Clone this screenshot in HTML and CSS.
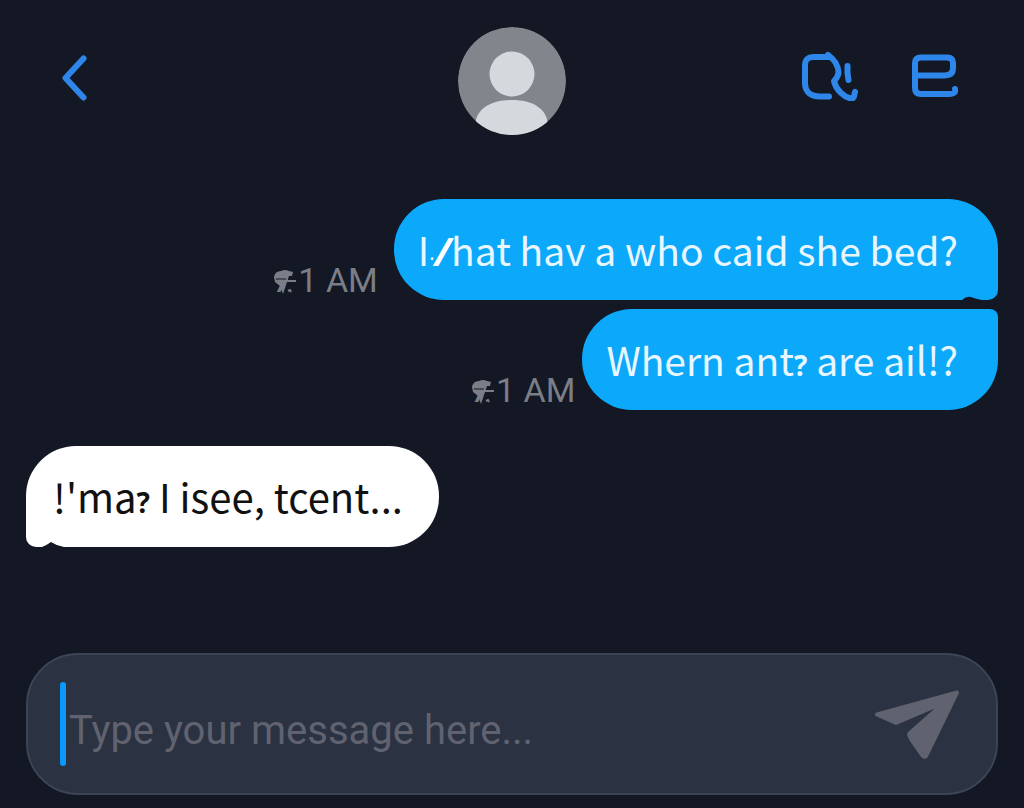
FILE: index.html
```html
<!DOCTYPE html>
<html lang="en">
<head>
<meta charset="utf-8">
<meta name="viewport" content="width=device-width, initial-scale=1">
<title>Chat</title>
<link rel="stylesheet" href="styles.css">
</head>
<body>
<div class="chat">
  <header class="header">
    <button class="icon-button back" aria-label="Back">
      <svg width="28" height="48" viewBox="0 0 28 48" fill="none"><path d="M21.500 5.500L3.500 25L21.500 44.500"/></svg>
    </button>
    <svg class="avatar" width="108" height="108" viewBox="0 0 108 108" role="img" aria-label="Contact">
      <defs><clipPath id="face"><circle cx="54" cy="54" r="54"/></clipPath></defs>
      <g clip-path="url(#face)">
        <circle cx="54" cy="54" r="54" fill="#82858b"/>
        <circle cx="54" cy="47" r="22.500" fill="#d5d8dc"/>
        <path fill="#d5d8dc" d="M17 100C17 81 34 73 54 73S90 81 90 100V110H17Z"/>
      </g>
    </svg>
    <div class="actions">
      <button class="icon-button" aria-label="Call">
        <svg width="60" height="52" viewBox="0 0 60 52" fill="none"><path d="M28 47.500H19C10 47.500 4 43 4 34V17C4 10 7 8 13 8H28M27 6C33 10 37.500 17 37.500 24C37 27 35 30 33 32C35 41 43 48 50 49.500C54 50 53 45 54 43"/><path d="M46.500 17V24L47.500 31"/></svg>
      </button>
      <button class="icon-button" aria-label="Details">
        <svg width="55" height="48" viewBox="0 0 55 48" fill="none"><path d="M8 24.500H37Q46 24.500 46 17V12Q46 6.500 40 6.500H14Q8 6.500 8 12V37Q8 43 14 43H43Q49 43 48 38"/></svg>
      </button>
    </div>
  </header>

  <main class="messages">
    <div class="row sent">
      <time class="time"><b class="smudge">7<svg width="24" height="26" viewBox="0 0 24 26"><path fill="#7b7e87" d="M0 8Q1 2 7 2Q11 0 15 2L19 3L18 7H15L9 25L6 17L1 13Z"/><path stroke="#131824" d="M2 10H12"/><path stroke="#7b7e87" stroke-width="2" d="M13 12H22M14 22L16 21L17 23"/></svg></b>1 AM</time>
      <p class="bubble first">I<span class="dot">·</span><b class="slash">/</b>hat hav a who caid she bed?<svg class="notch" width="28" height="5" viewBox="0 0 28 5"><path d="M0 5Q4 1 9 2Q14 4 20 5Z"/></svg></p>
    </div>
    <div class="row sent close">
      <time class="time"><b class="smudge">7<svg width="24" height="26" viewBox="0 0 24 26"><path fill="#7b7e87" d="M0 8Q1 2 7 2Q11 0 15 2L19 3L18 7H15L9 25L6 17L1 13Z"/><path stroke="#131824" d="M2 10H12"/><path stroke="#7b7e87" stroke-width="2" d="M13 12H22M14 22L16 21L17 23"/></svg></b>1 AM</time>
      <p class="bubble second">Whern ant<b class="mark">?</b> are ail!?</p>
    </div>
    <div class="row received">
      <p class="bubble reply">!'ma<b class="mark">?</b> I isee, tcent...<svg class="notch" width="28" height="6" viewBox="0 0 28 6"><path d="M0 6Q5 4 9 1Q15 5 22 6Z"/></svg></p>
    </div>
  </main>

  <form class="composer">
    <span class="caret"></span>
    <input class="field" type="text" aria-label="Message" placeholder="Type your message here...">
    <button class="send" type="button" aria-label="Send">
      <svg width="86" height="70" viewBox="0 0 86 70"><path stroke="#60636f" stroke-width="4" stroke-linejoin="round" fill="#60636f" d="M3 25.500L83 3.500L52 67Q50 69 48 66L37 50Q34 45 36 44L71 13L22 34Z"/></svg>
    </button>
  </form>
</div>
</body>
</html>
```
FILE: styles.css
```css
* { box-sizing: border-box; }
body {
  margin: 0;
  background: #131824;
  font-family: "Noto Sans CJK SC", "Noto Sans", sans-serif;
}
.chat {
  min-height: 100vh;
  display: flex;
  flex-direction: column;
  padding: 27px 26px 13px;
}
.header {
  display: grid;
  grid-template-columns: 1fr auto 1fr;
  align-items: center;
  padding: 0 36px;
}
.icon-button, .send {
  display: block;
  padding: 0;
  border: 0;
  background: none;
}
.icon-button svg, .send svg, .avatar { display: block; }
.icon-button path {
  stroke: #2f86ea;
  stroke-width: 6;
  stroke-linecap: round;
  stroke-linejoin: round;
}
.back { padding-bottom: 8px; }
.actions {
  display: flex;
  justify-content: flex-end;
  align-items: center;
  gap: 46px;
  padding-bottom: 12px;
}
.messages {
  flex: 1;
  display: flex;
  flex-direction: column;
  padding-top: 64px;
}
.row {
  display: flex;
  align-items: flex-end;
  gap: 16px;
}
.sent { justify-content: flex-end; }
.close { gap: 7px; margin-top: 9px; }
.received { margin-top: 36px; }
.time {
  font: 34px/32px Roboto, sans-serif;
  color: #7b7e87;
  white-space: nowrap;
}
.smudge {
  position: relative;
  display: inline-block;
  width: 24px;
  font-size: 24px;
}
.smudge svg {
  position: absolute;
  left: 0;
  top: 1px;
}
.bubble {
  position: relative;
  margin: 0;
  padding: 23px 40px 23px 24px;
  border-radius: 50px;
  background: #0ca8fa;
  color: #e8f6ff;
  font-size: 39px;
  line-height: 55px;
  white-space: nowrap;
}
.first { border-bottom-right-radius: 10px; }
.second { border-top-right-radius: 8px; }
.reply {
  padding: 23px 36px 23px 27px;
  border-bottom-left-radius: 10px;
  background: #fff;
  color: #111;
  font-size: 40px;
}
.dot, .slash, .mark {
  font-family: "Noto Sans", sans-serif;
  line-height: 1;
}
.dot { font-size: 20px; }
.slash { font-style: italic; color: #fff; }
.mark { font-size: 28px; }
.notch {
  position: absolute;
  right: 8px;
  bottom: 0;
  fill: #131824;
}
.reply .notch { left: 16px; }
.composer {
  display: flex;
  align-items: center;
  height: 142px;
  padding: 0 36px 0 32px;
  border: 2px solid #3d4453;
  border-radius: 52px;
  background: #2b3242;
}
.caret {
  width: 6px;
  height: 84px;
  border-radius: 3px;
  background: #0a98ff;
}
.field {
  flex: 1;
  min-width: 0;
  border: 0;
  padding: 14px 0 0 3px;
  background: none;
  color: #d5d8dc;
  font: 40px/48px Roboto, sans-serif;
  outline: 0;
}
.field::placeholder { color: #60636f; opacity: 1; }
```
